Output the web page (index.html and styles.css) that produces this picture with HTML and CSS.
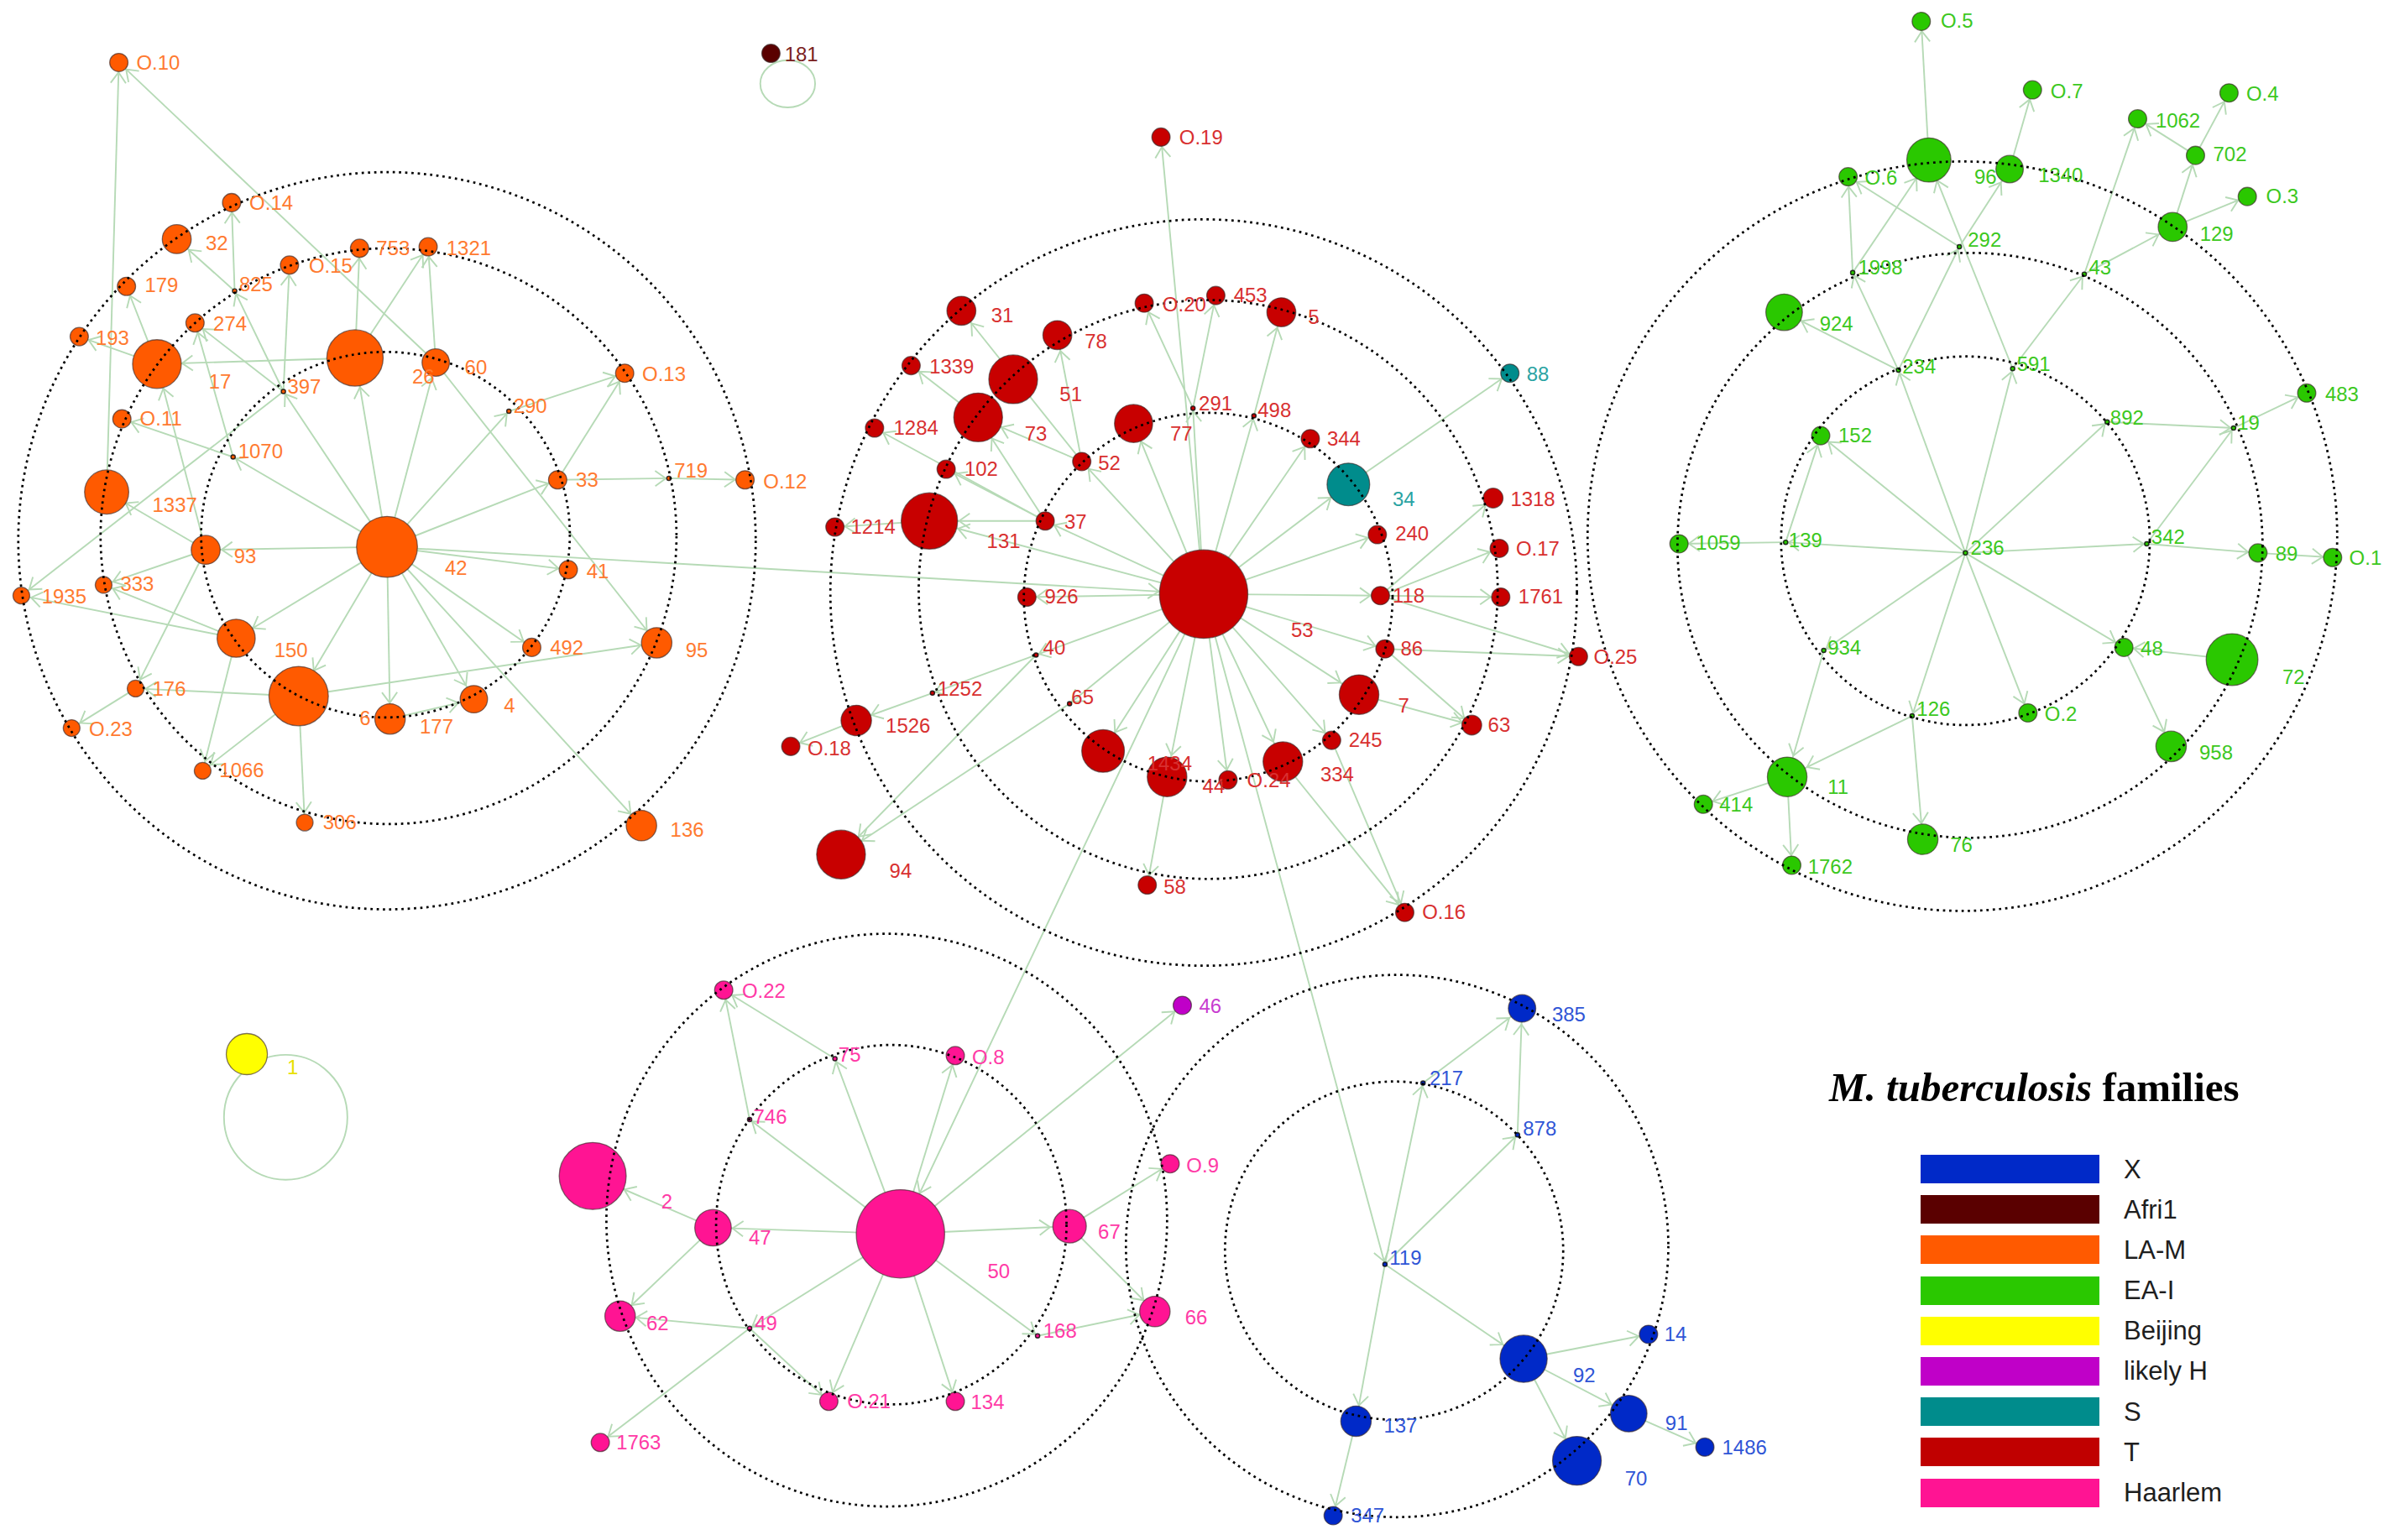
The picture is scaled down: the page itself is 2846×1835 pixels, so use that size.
FILE: index.html
```html
<!DOCTYPE html>
<html lang="en">
<head>
<meta charset="utf-8">
<title>M. tuberculosis families</title>
<link rel="stylesheet" href="styles.css">
</head>
<body>
<main class="figure">
<svg class="graph" viewBox="0 0 1568 1011" width="2846" height="1835" xmlns="http://www.w3.org/2000/svg">
<defs>
<marker id="a2" class="mk" markerUnits="userSpaceOnUse" markerWidth="1" markerHeight="1" refX="2" refY="0" orient="auto"><path class="arrow" d="M-7,-5 L0,0 L-7,5"/></marker>
<marker id="a6" class="mk" markerUnits="userSpaceOnUse" markerWidth="1" markerHeight="1" refX="6.5" refY="0" orient="auto"><path class="arrow" d="M-7,-5 L0,0 L-7,5"/></marker>
<marker id="a10" class="mk" markerUnits="userSpaceOnUse" markerWidth="1" markerHeight="1" refX="10.5" refY="0" orient="auto"><path class="arrow" d="M-7,-5 L0,0 L-7,5"/></marker>
<marker id="a12" class="mk" markerUnits="userSpaceOnUse" markerWidth="1" markerHeight="1" refX="12.8" refY="0" orient="auto"><path class="arrow" d="M-7,-5 L0,0 L-7,5"/></marker>
<marker id="a14" class="mk" markerUnits="userSpaceOnUse" markerWidth="1" markerHeight="1" refX="14.5" refY="0" orient="auto"><path class="arrow" d="M-7,-5 L0,0 L-7,5"/></marker>
<marker id="a16" class="mk" markerUnits="userSpaceOnUse" markerWidth="1" markerHeight="1" refX="16.5" refY="0" orient="auto"><path class="arrow" d="M-7,-5 L0,0 L-7,5"/></marker>
<marker id="a19" class="mk" markerUnits="userSpaceOnUse" markerWidth="1" markerHeight="1" refX="19.5" refY="0" orient="auto"><path class="arrow" d="M-7,-5 L0,0 L-7,5"/></marker>
<marker id="a22" class="mk" markerUnits="userSpaceOnUse" markerWidth="1" markerHeight="1" refX="22.5" refY="0" orient="auto"><path class="arrow" d="M-7,-5 L0,0 L-7,5"/></marker>
<marker id="a29" class="mk" markerUnits="userSpaceOnUse" markerWidth="1" markerHeight="1" refX="29.5" refY="0" orient="auto"><path class="arrow" d="M-7,-5 L0,0 L-7,5"/></marker>
</defs>

<g class="edges">
<!-- LA-M -->
<line x1="254" y1="359" x2="186" y2="257" marker-end="url(#a2)"/>
<line x1="254" y1="359" x2="153" y2="300" marker-end="url(#a2)"/>
<line x1="254" y1="359" x2="233" y2="235" marker-end="url(#a19)"/>
<line x1="254" y1="359" x2="286" y2="238" marker-end="url(#a10)"/>
<line x1="254" y1="359" x2="334" y2="270" marker-end="url(#a2)"/>
<line x1="254" y1="359" x2="366" y2="315" marker-end="url(#a6)"/>
<line x1="254" y1="359" x2="373" y2="374" marker-end="url(#a6)"/>
<line x1="254" y1="359" x2="349" y2="425" marker-end="url(#a6)"/>
<line x1="254" y1="359" x2="311" y2="459" marker-end="url(#a10)"/>
<line x1="254" y1="359" x2="256" y2="472" marker-end="url(#a10)"/>
<line x1="254" y1="359" x2="196" y2="457" marker-end="url(#a19)"/>
<line x1="254" y1="359" x2="155" y2="419" marker-end="url(#a12)"/>
<line x1="254" y1="359" x2="135" y2="361" marker-end="url(#a10)"/>
<line x1="254" y1="359" x2="421" y2="542" marker-end="url(#a10)"/>
<line x1="254" y1="359" x2="790" y2="390" marker-end="url(#a29)"/>
<line x1="103" y1="239" x2="52" y2="221" marker-end="url(#a6)"/>
<line x1="103" y1="239" x2="83" y2="188" marker-end="url(#a6)"/>
<line x1="233" y1="235" x2="103" y2="239" marker-end="url(#a16)"/>
<line x1="233" y1="235" x2="236" y2="163" marker-end="url(#a6)"/>
<line x1="233" y1="235" x2="281" y2="162" marker-end="url(#a6)"/>
<line x1="286" y1="238" x2="281" y2="162" marker-end="url(#a6)"/>
<line x1="286" y1="238" x2="431" y2="422" marker-end="url(#a10)"/>
<line x1="286" y1="238" x2="78" y2="41" marker-end="url(#a6)"/>
<line x1="70" y1="323" x2="78" y2="41" marker-end="url(#a6)"/>
<line x1="154" y1="191" x2="152" y2="133" marker-end="url(#a6)"/>
<line x1="154" y1="191" x2="116" y2="157" marker-end="url(#a10)"/>
<line x1="186" y1="257" x2="154" y2="191" marker-end="url(#a2)"/>
<line x1="186" y1="257" x2="190" y2="174" marker-end="url(#a6)"/>
<line x1="186" y1="257" x2="128" y2="212" marker-end="url(#a6)"/>
<line x1="186" y1="257" x2="14" y2="391" marker-end="url(#a6)"/>
<line x1="153" y1="300" x2="80" y2="275" marker-end="url(#a6)"/>
<line x1="153" y1="300" x2="128" y2="212" marker-end="url(#a6)"/>
<line x1="135" y1="361" x2="70" y2="323" marker-end="url(#a14)"/>
<line x1="135" y1="361" x2="103" y2="239" marker-end="url(#a16)"/>
<line x1="135" y1="361" x2="68" y2="384" marker-end="url(#a6)"/>
<line x1="135" y1="361" x2="89" y2="452" marker-end="url(#a6)"/>
<line x1="155" y1="419" x2="14" y2="391" marker-end="url(#a6)"/>
<line x1="155" y1="419" x2="68" y2="384" marker-end="url(#a6)"/>
<line x1="155" y1="419" x2="133" y2="506" marker-end="url(#a6)"/>
<line x1="196" y1="457" x2="89" y2="452" marker-end="url(#a6)"/>
<line x1="196" y1="457" x2="133" y2="506" marker-end="url(#a6)"/>
<line x1="196" y1="457" x2="200" y2="540" marker-end="url(#a6)"/>
<line x1="196" y1="457" x2="431" y2="422" marker-end="url(#a10)"/>
<line x1="89" y1="452" x2="47" y2="478" marker-end="url(#a6)"/>
<line x1="256" y1="472" x2="311" y2="459" marker-end="url(#a10)"/>
<line x1="366" y1="315" x2="410" y2="245" marker-end="url(#a6)"/>
<line x1="334" y1="270" x2="410" y2="245" marker-end="url(#a6)"/>
<line x1="366" y1="315" x2="439" y2="314" marker-end="url(#a2)"/>
<line x1="439" y1="314" x2="489" y2="315" marker-end="url(#a6)"/>
<!-- Afri1 loop -->
<ellipse cx="517" cy="55" rx="18" ry="15.5"/>
<!-- T -->
<line x1="790" y1="390" x2="762" y2="90" marker-end="url(#a6)"/>
<line x1="790" y1="390" x2="744" y2="278" marker-end="url(#a12)"/>
<line x1="790" y1="390" x2="710" y2="303" marker-end="url(#a6)"/>
<line x1="790" y1="390" x2="686" y2="342" marker-end="url(#a6)"/>
<line x1="790" y1="390" x2="674" y2="392" marker-end="url(#a6)"/>
<line x1="790" y1="390" x2="680" y2="430" marker-end="url(#a2)"/>
<line x1="790" y1="390" x2="702" y2="462" marker-end="url(#a2)"/>
<line x1="790" y1="390" x2="724" y2="493" marker-end="url(#a14)"/>
<line x1="790" y1="390" x2="766" y2="510" marker-end="url(#a14)"/>
<line x1="790" y1="390" x2="806" y2="512" marker-end="url(#a6)"/>
<line x1="790" y1="390" x2="874" y2="486" marker-end="url(#a6)"/>
<line x1="790" y1="390" x2="842" y2="500" marker-end="url(#a14)"/>
<line x1="790" y1="390" x2="892" y2="456" marker-end="url(#a14)"/>
<line x1="790" y1="390" x2="909" y2="426" marker-end="url(#a6)"/>
<line x1="790" y1="390" x2="906" y2="391" marker-end="url(#a6)"/>
<line x1="790" y1="390" x2="904" y2="351" marker-end="url(#a6)"/>
<line x1="790" y1="390" x2="885" y2="318" marker-end="url(#a14)"/>
<line x1="790" y1="390" x2="860" y2="288" marker-end="url(#a6)"/>
<line x1="790" y1="390" x2="823" y2="273" marker-end="url(#a2)"/>
<line x1="790" y1="390" x2="783" y2="268" marker-end="url(#a2)"/>
<line x1="790" y1="390" x2="610" y2="342" marker-end="url(#a19)"/>
<line x1="790" y1="390" x2="909" y2="830" marker-end="url(#a2)"/>
<line x1="790" y1="390" x2="591" y2="810" marker-end="url(#a29)"/>
<line x1="783" y1="268" x2="751" y2="199" marker-end="url(#a6)"/>
<line x1="783" y1="268" x2="798" y2="194" marker-end="url(#a6)"/>
<line x1="823" y1="273" x2="841" y2="205" marker-end="url(#a10)"/>
<line x1="710" y1="303" x2="694" y2="220" marker-end="url(#a10)"/>
<line x1="710" y1="303" x2="631" y2="204" marker-end="url(#a10)"/>
<line x1="710" y1="303" x2="642" y2="274" marker-end="url(#a16)"/>
<line x1="686" y1="342" x2="621" y2="308" marker-end="url(#a6)"/>
<line x1="686" y1="342" x2="574" y2="281" marker-end="url(#a6)"/>
<line x1="686" y1="342" x2="642" y2="274" marker-end="url(#a16)"/>
<line x1="686" y1="342" x2="610" y2="342" marker-end="url(#a19)"/>
<line x1="642" y1="274" x2="598" y2="240" marker-end="url(#a6)"/>
<line x1="610" y1="342" x2="548" y2="346" marker-end="url(#a6)"/>
<line x1="680" y1="430" x2="612" y2="455" marker-end="url(#a2)"/>
<line x1="612" y1="455" x2="562" y2="473" marker-end="url(#a10)"/>
<line x1="562" y1="473" x2="519" y2="490" marker-end="url(#a6)"/>
<line x1="680" y1="430" x2="552" y2="561" marker-end="url(#a16)"/>
<line x1="702" y1="462" x2="552" y2="561" marker-end="url(#a16)"/>
<line x1="906" y1="391" x2="980" y2="327" marker-end="url(#a6)"/>
<line x1="906" y1="391" x2="984" y2="360" marker-end="url(#a6)"/>
<line x1="906" y1="391" x2="985" y2="392" marker-end="url(#a6)"/>
<line x1="906" y1="391" x2="1036" y2="431" marker-end="url(#a6)"/>
<line x1="909" y1="426" x2="1036" y2="431" marker-end="url(#a6)"/>
<line x1="909" y1="426" x2="966" y2="476" marker-end="url(#a6)"/>
<line x1="892" y1="456" x2="966" y2="476" marker-end="url(#a6)"/>
<line x1="885" y1="318" x2="991" y2="245" marker-end="url(#a6)"/>
<line x1="766" y1="510" x2="753" y2="581" marker-end="url(#a6)"/>
<line x1="842" y1="500" x2="922" y2="599" marker-end="url(#a6)"/>
<line x1="874" y1="486" x2="922" y2="599" marker-end="url(#a6)"/>
<!-- EA-I -->
<line x1="1290" y1="363" x2="1195" y2="286" marker-end="url(#a6)"/>
<line x1="1290" y1="363" x2="1172" y2="356" marker-end="url(#a2)"/>
<line x1="1290" y1="363" x2="1246" y2="243" marker-end="url(#a2)"/>
<line x1="1290" y1="363" x2="1321" y2="242" marker-end="url(#a2)"/>
<line x1="1290" y1="363" x2="1383" y2="277" marker-end="url(#a2)"/>
<line x1="1290" y1="363" x2="1409" y2="357" marker-end="url(#a2)"/>
<line x1="1290" y1="363" x2="1394" y2="425" marker-end="url(#a6)"/>
<line x1="1290" y1="363" x2="1331" y2="468" marker-end="url(#a6)"/>
<line x1="1290" y1="363" x2="1255" y2="470" marker-end="url(#a2)"/>
<line x1="1290" y1="363" x2="1197" y2="427" marker-end="url(#a2)"/>
<line x1="1172" y1="356" x2="1102" y2="357" marker-end="url(#a6)"/>
<line x1="1172" y1="356" x2="1195" y2="286" marker-end="url(#a6)"/>
<line x1="1246" y1="243" x2="1171" y2="205" marker-end="url(#a12)"/>
<line x1="1246" y1="243" x2="1286" y2="162" marker-end="url(#a2)"/>
<line x1="1246" y1="243" x2="1216" y2="179" marker-end="url(#a2)"/>
<line x1="1216" y1="179" x2="1213" y2="116" marker-end="url(#a6)"/>
<line x1="1286" y1="162" x2="1213" y2="116" marker-end="url(#a6)"/>
<line x1="1216" y1="179" x2="1266" y2="105" marker-end="url(#a14)"/>
<line x1="1321" y1="242" x2="1266" y2="105" marker-end="url(#a14)"/>
<line x1="1286" y1="162" x2="1319" y2="111" marker-end="url(#a10)"/>
<line x1="1319" y1="111" x2="1334" y2="59" marker-end="url(#a6)"/>
<line x1="1266" y1="105" x2="1261" y2="14" marker-end="url(#a6)"/>
<line x1="1321" y1="242" x2="1368" y2="180" marker-end="url(#a2)"/>
<line x1="1368" y1="180" x2="1403" y2="78" marker-end="url(#a6)"/>
<line x1="1368" y1="180" x2="1426" y2="149" marker-end="url(#a10)"/>
<line x1="1426" y1="149" x2="1441" y2="102" marker-end="url(#a6)"/>
<line x1="1426" y1="149" x2="1475" y2="129" marker-end="url(#a6)"/>
<line x1="1441" y1="102" x2="1463" y2="61" marker-end="url(#a6)"/>
<line x1="1441" y1="102" x2="1403" y2="78" marker-end="url(#a6)"/>
<line x1="1383" y1="277" x2="1466" y2="281" marker-end="url(#a2)"/>
<line x1="1409" y1="357" x2="1466" y2="281" marker-end="url(#a2)"/>
<line x1="1466" y1="281" x2="1514" y2="258" marker-end="url(#a6)"/>
<line x1="1409" y1="357" x2="1482" y2="363" marker-end="url(#a6)"/>
<line x1="1482" y1="363" x2="1531" y2="366" marker-end="url(#a6)"/>
<line x1="1394" y1="425" x2="1425" y2="490" marker-end="url(#a10)"/>
<line x1="1465" y1="433" x2="1394" y2="425" marker-end="url(#a6)"/>
<line x1="1197" y1="427" x2="1173" y2="510" marker-end="url(#a14)"/>
<line x1="1255" y1="470" x2="1173" y2="510" marker-end="url(#a14)"/>
<line x1="1255" y1="470" x2="1262" y2="551" marker-end="url(#a10)"/>
<line x1="1173" y1="510" x2="1118" y2="528" marker-end="url(#a6)"/>
<line x1="1173" y1="510" x2="1176" y2="568" marker-end="url(#a6)"/>
<!-- Beijing loop -->
<ellipse cx="187.5" cy="733.5" rx="40.5" ry="41"/>
<!-- Haarlem -->
<line x1="591" y1="810" x2="468" y2="806" marker-end="url(#a12)"/>
<line x1="591" y1="810" x2="492" y2="735" marker-end="url(#a2)"/>
<line x1="591" y1="810" x2="548" y2="695" marker-end="url(#a2)"/>
<line x1="591" y1="810" x2="627" y2="693" marker-end="url(#a6)"/>
<line x1="591" y1="810" x2="776" y2="660" marker-end="url(#a6)"/>
<line x1="591" y1="810" x2="702" y2="805" marker-end="url(#a12)"/>
<line x1="591" y1="810" x2="681" y2="877" marker-end="url(#a2)"/>
<line x1="591" y1="810" x2="627" y2="920" marker-end="url(#a6)"/>
<line x1="591" y1="810" x2="544" y2="920" marker-end="url(#a6)"/>
<line x1="591" y1="810" x2="492" y2="872" marker-end="url(#a2)"/>
<line x1="468" y1="806" x2="389" y2="772" marker-end="url(#a22)"/>
<line x1="468" y1="806" x2="407" y2="864" marker-end="url(#a10)"/>
<line x1="492" y1="872" x2="407" y2="864" marker-end="url(#a10)"/>
<line x1="492" y1="872" x2="544" y2="920" marker-end="url(#a6)"/>
<line x1="492" y1="872" x2="394" y2="947" marker-end="url(#a6)"/>
<line x1="492" y1="735" x2="475" y2="650" marker-end="url(#a6)"/>
<line x1="548" y1="695" x2="475" y2="650" marker-end="url(#a6)"/>
<line x1="702" y1="805" x2="768" y2="764" marker-end="url(#a6)"/>
<line x1="702" y1="805" x2="758" y2="861" marker-end="url(#a10)"/>
<line x1="681" y1="877" x2="758" y2="861" marker-end="url(#a10)"/>
<!-- X -->
<line x1="909" y1="830" x2="934" y2="711" marker-end="url(#a2)"/>
<line x1="909" y1="830" x2="996" y2="745" marker-end="url(#a2)"/>
<line x1="909" y1="830" x2="1000" y2="892" marker-end="url(#a16)"/>
<line x1="909" y1="830" x2="890" y2="933" marker-end="url(#a10)"/>
<line x1="934" y1="711" x2="999" y2="662" marker-end="url(#a10)"/>
<line x1="996" y1="745" x2="999" y2="662" marker-end="url(#a10)"/>
<line x1="1000" y1="892" x2="1082" y2="876" marker-end="url(#a6)"/>
<line x1="1000" y1="892" x2="1069" y2="928" marker-end="url(#a12)"/>
<line x1="1000" y1="892" x2="1035" y2="959" marker-end="url(#a16)"/>
<line x1="1069" y1="928" x2="1119" y2="950" marker-end="url(#a6)"/>
<line x1="890" y1="933" x2="875" y2="995" marker-end="url(#a6)"/>
</g>

<g class="nodes">
<!-- LA-M -->
<g class="n-lam">
<circle cx="78" cy="41" r="6"/>
<circle cx="152" cy="133" r="6"/>
<circle cx="116" cy="157" r="9.5"/>
<circle cx="83" cy="188" r="6"/>
<circle class="dot" cx="154" cy="191" r="1.4"/>
<circle cx="190" cy="174" r="6"/>
<circle cx="236" cy="163" r="6"/>
<circle cx="281" cy="162" r="6"/>
<circle cx="128" cy="212" r="6"/>
<circle cx="52" cy="221" r="6"/>
<circle cx="103" cy="239" r="16"/>
<circle class="dot" cx="186" cy="257" r="1.4"/>
<circle cx="233" cy="235" r="18.5"/>
<circle cx="286" cy="238" r="9"/>
<circle cx="80" cy="275" r="6"/>
<circle class="dot" cx="153" cy="300" r="1.4"/>
<circle class="dot" cx="334" cy="270" r="1.4"/>
<circle cx="410" cy="245" r="6"/>
<circle cx="366" cy="315" r="6"/>
<circle class="dot" cx="439" cy="314" r="1.4"/>
<circle cx="489" cy="315" r="6"/>
<circle cx="70" cy="323" r="14.5"/>
<circle cx="135" cy="361" r="9.5"/>
<circle cx="254" cy="359" r="20"/>
<circle cx="68" cy="384" r="5.5"/>
<circle cx="14" cy="391" r="5.5"/>
<circle cx="373" cy="374" r="6"/>
<circle cx="155" cy="419" r="12.5"/>
<circle cx="349" cy="425" r="6"/>
<circle cx="431" cy="422" r="10"/>
<circle cx="89" cy="452" r="5.5"/>
<circle cx="196" cy="457" r="19.5"/>
<circle cx="256" cy="472" r="10"/>
<circle cx="311" cy="459" r="9"/>
<circle cx="47" cy="478" r="5.5"/>
<circle cx="133" cy="506" r="5.5"/>
<circle cx="200" cy="540" r="5.5"/>
<circle cx="421" cy="542" r="10"/>
</g>
<g class="n-af"><circle cx="506" cy="35" r="6"/></g>
<!-- T -->
<g class="n-t">
<circle cx="790" cy="390" r="29"/>
<circle cx="762" cy="90" r="6"/>
<circle cx="631" cy="204" r="9.5"/>
<circle cx="694" cy="220" r="9.5"/>
<circle cx="751" cy="199" r="6"/>
<circle cx="798" cy="194" r="6"/>
<circle cx="841" cy="205" r="9.5"/>
<circle cx="598" cy="240" r="6"/>
<circle cx="665" cy="249" r="16"/>
<circle cx="642" cy="274" r="16"/>
<circle cx="574" cy="281" r="6"/>
<circle cx="710" cy="303" r="6"/>
<circle cx="744" cy="278" r="12.5"/>
<circle class="dot" cx="783" cy="268" r="1.4"/>
<circle class="dot" cx="823" cy="273" r="1.4"/>
<circle cx="860" cy="288" r="6"/>
<circle cx="621" cy="308" r="6"/>
<circle cx="548" cy="346" r="6"/>
<circle cx="610" cy="342" r="18.5"/>
<circle cx="686" cy="342" r="6"/>
<circle cx="980" cy="327" r="6.5"/>
<circle cx="904" cy="351" r="6"/>
<circle cx="984" cy="360" r="6"/>
<circle cx="674" cy="392" r="6"/>
<circle cx="906" cy="391" r="6"/>
<circle cx="985" cy="392" r="6"/>
<circle class="dot" cx="680" cy="430" r="1.4"/>
<circle cx="909" cy="426" r="6"/>
<circle cx="1036" cy="431" r="6"/>
<circle class="dot" cx="612" cy="455" r="1.4"/>
<circle class="dot" cx="702" cy="462" r="1.4"/>
<circle cx="892" cy="456" r="13"/>
<circle cx="562" cy="473" r="10"/>
<circle cx="519" cy="490" r="6"/>
<circle cx="966" cy="476" r="6.5"/>
<circle cx="874" cy="486" r="6"/>
<circle cx="724" cy="493" r="14"/>
<circle cx="766" cy="510" r="13"/>
<circle cx="806" cy="512" r="6"/>
<circle cx="842" cy="500" r="13"/>
<circle cx="552" cy="561" r="16"/>
<circle cx="753" cy="581" r="6"/>
<circle cx="922" cy="599" r="6"/>
</g>
<g class="n-s">
<circle cx="885" cy="318" r="14"/>
<circle cx="991" cy="245" r="6"/>
</g>
<!-- EA-I -->
<g class="n-ea">
<circle cx="1261" cy="14" r="6"/>
<circle cx="1334" cy="59" r="6"/>
<circle cx="1463" cy="61" r="6"/>
<circle cx="1403" cy="78" r="6"/>
<circle cx="1441" cy="102" r="6"/>
<circle cx="1475" cy="129" r="6"/>
<circle cx="1266" cy="105" r="14.5"/>
<circle cx="1319" cy="111" r="9"/>
<circle cx="1213" cy="116" r="6"/>
<circle cx="1426" cy="149" r="9.5"/>
<circle class="dot" cx="1286" cy="162" r="1.4"/>
<circle class="dot" cx="1216" cy="179" r="1.4"/>
<circle class="dot" cx="1368" cy="180" r="1.4"/>
<circle cx="1171" cy="205" r="12"/>
<circle class="dot" cx="1246" cy="243" r="1.4"/>
<circle class="dot" cx="1321" cy="242" r="1.4"/>
<circle cx="1514" cy="258" r="6"/>
<circle class="dot" cx="1383" cy="277" r="1.4"/>
<circle class="dot" cx="1466" cy="281" r="1.4"/>
<circle cx="1195" cy="286" r="6"/>
<circle cx="1102" cy="357" r="6"/>
<circle class="dot" cx="1172" cy="356" r="1.4"/>
<circle class="dot" cx="1290" cy="363" r="1.4"/>
<circle class="dot" cx="1409" cy="357" r="1.4"/>
<circle cx="1482" cy="363" r="6"/>
<circle cx="1531" cy="366" r="6"/>
<circle class="dot" cx="1197" cy="427" r="1.4"/>
<circle cx="1394" cy="425" r="6"/>
<circle cx="1465" cy="433" r="17"/>
<circle class="dot" cx="1255" cy="470" r="1.4"/>
<circle cx="1331" cy="468" r="6"/>
<circle cx="1425" cy="490" r="10"/>
<circle cx="1173" cy="510" r="13"/>
<circle cx="1118" cy="528" r="6"/>
<circle cx="1262" cy="551" r="10"/>
<circle cx="1176" cy="568" r="6"/>
</g>
<g class="n-bj"><circle cx="162" cy="692" r="13.5"/></g>
<!-- Haarlem -->
<g class="n-h">
<circle cx="475" cy="650" r="6"/>
<circle class="dot" cx="548" cy="695" r="1.4"/>
<circle cx="627" cy="693" r="6"/>
<circle class="dot" cx="492" cy="735" r="1.4"/>
<circle cx="389" cy="772" r="22"/>
<circle cx="768" cy="764" r="6"/>
<circle cx="468" cy="806" r="12"/>
<circle cx="591" cy="810" r="29"/>
<circle cx="702" cy="805" r="11"/>
<circle cx="407" cy="864" r="10"/>
<circle class="dot" cx="492" cy="872" r="1.4"/>
<circle cx="758" cy="861" r="10"/>
<circle class="dot" cx="681" cy="877" r="1.4"/>
<circle cx="544" cy="920" r="6"/>
<circle cx="627" cy="920" r="6"/>
<circle cx="394" cy="947" r="6"/>
</g>
<g class="n-lh"><circle cx="776" cy="660" r="6"/></g>
<!-- X -->
<g class="n-x">
<circle cx="999" cy="662" r="9"/>
<circle class="dot" cx="934" cy="711" r="1.4"/>
<circle class="dot" cx="996" cy="745" r="1.4"/>
<circle class="dot" cx="909" cy="830" r="1.4"/>
<circle cx="1082" cy="876" r="6"/>
<circle cx="1000" cy="892" r="15.5"/>
<circle cx="1069" cy="928" r="12"/>
<circle cx="1119" cy="950" r="6"/>
<circle cx="890" cy="933" r="10"/>
<circle cx="1035" cy="959" r="16"/>
<circle cx="875" cy="995" r="6"/>
</g>
</g>

<g class="rings">
<ellipse cx="253" cy="351" rx="121" ry="120"/>
<circle cx="255" cy="352" r="189"/>
<circle cx="254" cy="355" r="242"/>
<circle cx="793" cy="392" r="121"/>
<circle cx="793" cy="387" r="190"/>
<circle cx="790" cy="389" r="245"/>
<circle cx="1290" cy="355" r="121"/>
<circle cx="1293" cy="358" r="192"/>
<circle cx="1288" cy="352" r="246"/>
<ellipse cx="585" cy="804" rx="115" ry="118"/>
<ellipse cx="582" cy="801" rx="184" ry="188"/>
<circle cx="915" cy="821" r="111"/>
<circle cx="917" cy="818" r="178"/>
</g>

<g class="labels">
<g class="t-lam">
<text x="89.5" y="46">O.10</text>
<text x="163.7" y="138">O.14</text>
<text x="135" y="164">32</text>
<text x="95" y="192">179</text>
<text x="157" y="191">825</text>
<text x="202.7" y="179">O.15</text>
<text x="247" y="167.5">753</text>
<text x="293" y="167.5">1321</text>
<text x="140" y="217">274</text>
<text x="62.8" y="226.5">193</text>
<text x="137" y="255">17</text>
<text x="188.7" y="258.5">397</text>
<text x="270.5" y="252">26</text>
<text x="305" y="246">60</text>
<text x="91.8" y="279.5">O.11</text>
<text x="156.3" y="301">1070</text>
<text x="337" y="271">290</text>
<text x="421.5" y="250">O.13</text>
<text x="378" y="319.5">33</text>
<text x="442.5" y="313.5">719</text>
<text x="501" y="320.5">O.12</text>
<text x="100" y="336">1337</text>
<text x="153.6" y="369.5">93</text>
<text x="292" y="377.5">42</text>
<text x="79" y="388">333</text>
<text x="27.4" y="396">1935</text>
<text x="385" y="379.5">41</text>
<text x="180" y="431.5">150</text>
<text x="361" y="429.5">492</text>
<text x="450" y="431.5">95</text>
<text x="100" y="456.5">176</text>
<text x="236" y="476">6</text>
<text x="275.5" y="481.5">177</text>
<text x="330.7" y="467.5">4</text>
<text x="58.4" y="483">O.23</text>
<text x="144" y="510">1066</text>
<text x="212" y="544.5">306</text>
<text x="440" y="549.5">136</text>
</g>
<g class="t-af"><text x="515" y="40">181</text></g>
<g class="t-t">
<text x="774" y="95">O.19</text>
<text x="650.5" y="211.5">31</text>
<text x="712" y="228.5">78</text>
<text x="763" y="204.5">O.20</text>
<text x="809.7" y="198.5">453</text>
<text x="858.5" y="212.5">5</text>
<text x="610" y="245">1339</text>
<text x="695.5" y="263.5">51</text>
<text x="672.6" y="289.3">73</text>
<text x="586.5" y="285.5">1284</text>
<text x="768" y="289.3">77</text>
<text x="786.8" y="269.5">291</text>
<text x="825.5" y="274">498</text>
<text x="871" y="292.5">344</text>
<text x="720.8" y="308.5">52</text>
<text x="633" y="312.5">102</text>
<text x="558.4" y="350.5">1214</text>
<text x="647.7" y="360">131</text>
<text x="698.6" y="347">37</text>
<text x="991.4" y="332">1318</text>
<text x="915.8" y="355">240</text>
<text x="995" y="365">O.17</text>
<text x="685.7" y="396">926</text>
<text x="914" y="395.5">118</text>
<text x="996.6" y="396">1761</text>
<text x="684.6" y="429.5">40</text>
<text x="847.3" y="418">53</text>
<text x="919.3" y="430.5">86</text>
<text x="1046" y="436">O.25</text>
<text x="615.4" y="456.5">1252</text>
<text x="703.2" y="462.5">65</text>
<text x="917.6" y="467.5">7</text>
<text x="581.3" y="481">1526</text>
<text x="530" y="496">O.18</text>
<text x="976.6" y="480.5">63</text>
<text x="885.2" y="490.5">245</text>
<text x="753" y="506">1434</text>
<text x="789.3" y="520.5">44</text>
<text x="818.5" y="517">O.24</text>
<text x="866.6" y="513">334</text>
<text x="583.8" y="576.5">94</text>
<text x="763.7" y="587">58</text>
<text x="933.4" y="603.5">O.16</text>
</g>
<g class="t-s">
<text x="914" y="332">34</text>
<text x="1002" y="250">88</text>
</g>
<g class="t-ea">
<text x="1273.8" y="18">O.5</text>
<text x="1345.9" y="64.5">O.7</text>
<text x="1474.3" y="66.3">O.4</text>
<text x="1414.8" y="83.7">1062</text>
<text x="1452.6" y="106">702</text>
<text x="1487.3" y="133.2">O.3</text>
<text x="1295.8" y="120.5">96</text>
<text x="1337.8" y="119.3">1340</text>
<text x="1224" y="121.2">O.6</text>
<text x="1443.9" y="158">129</text>
<text x="1291.6" y="162.2">292</text>
<text x="1219.5" y="180.4">1998</text>
<text x="1371" y="180.4">43</text>
<text x="1194.3" y="217">924</text>
<text x="1248.6" y="245">234</text>
<text x="1323.8" y="243.4">591</text>
<text x="1526.1" y="263.5">483</text>
<text x="1385" y="279">892</text>
<text x="1468.4" y="282">19</text>
<text x="1206.6" y="290.5">152</text>
<text x="1113.1" y="361">1059</text>
<text x="1174" y="359.3">139</text>
<text x="1293.4" y="364">236</text>
<text x="1412" y="357">342</text>
<text x="1493.5" y="368">89</text>
<text x="1541.9" y="371">O.1</text>
<text x="1199.5" y="429.7">934</text>
<text x="1405" y="430.5">48</text>
<text x="1498" y="449">72</text>
<text x="1258" y="470.2">126</text>
<text x="1342" y="473">O.2</text>
<text x="1443.5" y="498.5">958</text>
<text x="1199.5" y="521">11</text>
<text x="1128.5" y="533">414</text>
<text x="1280" y="559">76</text>
<text x="1186.6" y="573.5">1762</text>
</g>
<g class="t-bj"><text x="188.4" y="705">1</text></g>
<g class="t-h">
<text x="487" y="655">O.22</text>
<text x="550.3" y="697">75</text>
<text x="638" y="698.5">O.8</text>
<text x="494.5" y="738">746</text>
<text x="434" y="793.5">2</text>
<text x="778.7" y="769.5">O.9</text>
<text x="491.4" y="817">47</text>
<text x="648.2" y="839">50</text>
<text x="720.7" y="813">67</text>
<text x="424.2" y="873.5">62</text>
<text x="495.4" y="873.5">49</text>
<text x="777.8" y="869.5">66</text>
<text x="684.7" y="878">168</text>
<text x="556" y="924.5">O.21</text>
<text x="637.2" y="925">134</text>
<text x="404.5" y="951.5">1763</text>
</g>
<g class="t-lh"><text x="787" y="665">46</text></g>
<g class="t-x">
<text x="1018.7" y="670.5">385</text>
<text x="938.3" y="712.5">217</text>
<text x="999.6" y="745.5">878</text>
<text x="912" y="830.5">119</text>
<text x="1092.4" y="880.5">14</text>
<text x="1032.5" y="907.5">92</text>
<text x="1093" y="939">91</text>
<text x="1130.3" y="955">1486</text>
<text x="908.2" y="940.7">137</text>
<text x="1066.5" y="975">70</text>
<text x="886.6" y="999.3">347</text>
</g>
</g>
</svg>

<aside class="legend">
<h1 class="legend-title"><i>M. tuberculosis</i> families</h1>
<ul class="legend-list">
<li class="legend-item"><span class="swatch sw-x"></span><span class="legend-label">X</span></li>
<li class="legend-item"><span class="swatch sw-afri"></span><span class="legend-label">Afri1</span></li>
<li class="legend-item"><span class="swatch sw-lam"></span><span class="legend-label">LA-M</span></li>
<li class="legend-item"><span class="swatch sw-ea"></span><span class="legend-label">EA-I</span></li>
<li class="legend-item"><span class="swatch sw-bj"></span><span class="legend-label">Beijing</span></li>
<li class="legend-item"><span class="swatch sw-lh"></span><span class="legend-label">likely H</span></li>
<li class="legend-item"><span class="swatch sw-s"></span><span class="legend-label">S</span></li>
<li class="legend-item"><span class="swatch sw-t"></span><span class="legend-label">T</span></li>
<li class="legend-item"><span class="swatch sw-h"></span><span class="legend-label">Haarlem</span></li>
</ul>
</aside>
</main>
</body>
</html>
```

FILE: styles.css
```css
html, body {
  margin: 0;
  padding: 0;
  background: #ffffff;
}

.figure {
  position: relative;
  width: 2846px;
  height: 1835px;
  overflow: hidden;
}

.graph {
  display: block;
}

/* edges */
.edges line,
.edges ellipse {
  stroke: #b6dab6;
  stroke-width: 1.05;
  fill: none;
}

.mk {
  overflow: visible;
}

.arrow {
  fill: none;
  stroke: #b6dab6;
  stroke-width: 1.05;
}

/* nodes */
.nodes circle {
  stroke: #3a2a2a;
  stroke-width: 0.7;
  stroke-opacity: 0.65;
}

.nodes .dot {
  stroke: #111111;
  stroke-width: 0.8;
  stroke-opacity: 0.85;
}

.n-lam { fill: #ff5a00; }
.n-af { fill: #5a0000; }
.n-t { fill: #c80000; }
.n-s { fill: #008c8c; }
.n-ea { fill: #2ac800; }
.n-bj { fill: #ffff00; }
.n-h { fill: #ff1493; }
.n-lh { fill: #c000c8; }
.n-x { fill: #0029c8; }

/* dotted rings */
.rings circle,
.rings ellipse {
  fill: none;
  stroke: #000000;
  stroke-width: 1.5;
  stroke-dasharray: 1.5 2.6;
}

/* labels */
.labels text {
  font-family: "Liberation Sans", Arial, sans-serif;
  font-size: 13.2px;
}

.t-lam { fill: #ff7a30; }
.t-af { fill: #7a2020; }
.t-t { fill: #d83030; }
.t-s { fill: #2aa3a3; }
.t-ea { fill: #3cc81e; }
.t-bj { fill: #e8e000; }
.t-h { fill: #ff3aa6; }
.t-lh { fill: #c83cd0; }
.t-x { fill: #2f55d6; }

/* legend */
.legend {
  position: absolute;
  left: 2179px;
  top: 1271px;
}

.legend-title {
  margin: 0;
  font-family: "Liberation Serif", "Times New Roman", serif;
  font-weight: bold;
  font-size: 49px;
  line-height: 1;
  color: #000000;
  white-space: nowrap;
}

.legend-title i {
  font-style: italic;
}

.legend-list {
  list-style: none;
  margin: 56px 0 0 109px;
  padding: 0;
  display: flex;
  flex-direction: column;
  gap: 14.2px;
}

.legend-item {
  display: flex;
  align-items: center;
  gap: 29px;
  height: 34px;
}

.swatch {
  display: block;
  width: 213px;
  height: 34px;
}

.legend-label {
  font-family: "Liberation Sans", Arial, sans-serif;
  font-size: 31px;
  line-height: 1;
  color: #1e1e1e;
}

.sw-x { background: #0029c8; }
.sw-afri { background: #5a0000; }
.sw-lam { background: #ff5a00; }
.sw-ea { background: #2ac800; }
.sw-bj { background: #ffff00; }
.sw-lh { background: #c000c8; }
.sw-s { background: #008c8c; }
.sw-t { background: #c00000; }
.sw-h { background: #ff1493; }
```
